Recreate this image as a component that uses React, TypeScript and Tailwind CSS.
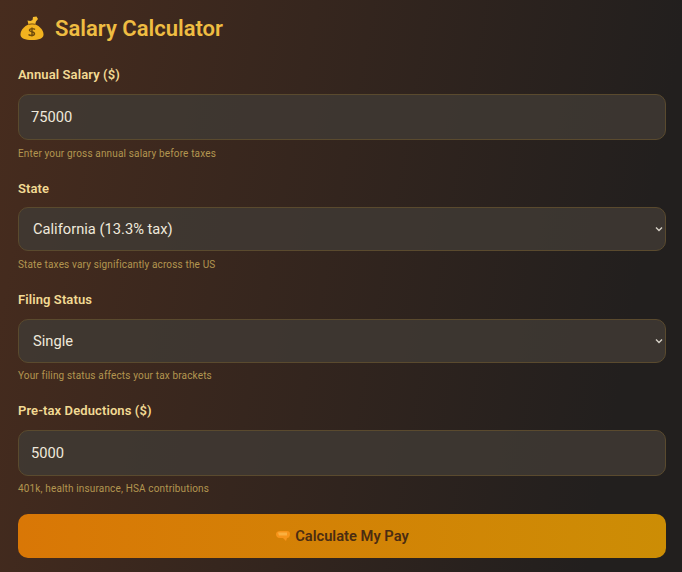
import { useState } from 'react';

const labelClass = 'block text-[13px] leading-[18px] font-semibold tracking-[0.1px] text-[#f2da94]';
const hintClass = 'text-[10px] leading-[14px] tracking-[0.15px] text-[#b39650]';
const fieldClass =
  'block w-full rounded-[10px] border border-[#5a4a2e] bg-[#3f3934d9] text-[#efe9dc] text-[14.7px] outline-none';

function MoneyBag() {
  return (
    <svg width="28" height="28" viewBox="0 0 28 28" aria-hidden="true">
      <path d="M2.500 20.500c0-4.500 4-8.500 8-10h7c4 1.500 8 5.500 8 10 0 4-4.500 5.500-11.500 5.500S2.500 24.500 2.500 20.500z" fill="#f3b31f" />
      <path d="M10.500 10.500L9.500 6.500l3 .5 2-1 .5-3 3.500-.5 1.500 2.500-2 2.500-1 3.500z" fill="#f6bc2e" />
      <path d="M10.500 10.500c2-.8 5-.8 7 0" stroke="#9a6a12" strokeWidth="1.200" fill="none" />
      <path
        d="M17 15.500c-1-1-5-1.500-5.500.5s5.500 1.500 5 4-5 1.500-6 .5M14 13.500v9"
        stroke="#6e4a0c"
        strokeWidth="1.400"
        fill="none"
      />
    </svg>
  );
}

function Coin() {
  return (
    <svg width="16" height="14" viewBox="0 0 16 14" aria-hidden="true">
      <path d="M1 5c0-2 2-3 4-3h7c2 0 3 1 3 3s-1 4-3 4l-1 3-3-3H5C2 9 1 7 1 5z" fill="#f7941a" />
      <path d="M3 3.500h9v3H4z" fill="#fab040" />
    </svg>
  );
}

function Chevron() {
  return (
    <svg
      className="pointer-events-none absolute right-[3px] top-1/2 -translate-y-1/2"
      width="8"
      height="6"
      viewBox="0 0 8 6"
      aria-hidden="true"
    >
      <path d="M1 1.500l3 3 3-3" stroke="#d6d0c6" strokeWidth="1.400" fill="none" />
    </svg>
  );
}

export default function App() {
  const [salary, setSalary] = useState('75000');
  const [state, setState] = useState('ca');
  const [status, setStatus] = useState('single');
  const [deductions, setDeductions] = useState('5000');

  return (
    <div
      className="h-[572px] w-[682px] overflow-hidden bg-[linear-gradient(100deg,#472c1e_0%,#221f1e_88%)] pl-[18px] pr-4 pt-[13px]"
      style={{ fontFamily: 'Roboto, sans-serif' }}
    >
      <h1 className="flex h-[30px] items-center gap-[9px] text-[22px] font-semibold text-[#efbd42]">
        <MoneyBag />
        Salary Calculator
      </h1>

      <form className="mt-[23px]" onSubmit={(event) => event.preventDefault()}>
        <label className={labelClass}>Annual Salary ($)</label>
        <input
          className={`${fieldClass} mt-[10px] h-[46px] px-3`}
          value={salary}
          onChange={(event) => setSalary(event.target.value)}
        />
        <p className={`${hintClass} mt-[7px]`}>Enter your gross annual salary before taxes</p>

        <label className={`${labelClass} mt-[19px]`}>State</label>
        <div className="relative mt-[9px]">
          <select
            className={`${fieldClass} h-[44px] appearance-none px-[14px]`}
            value={state}
            onChange={(event) => setState(event.target.value)}
          >
            <option value="ca" className="bg-[#2a2522]">California (13.3% tax)</option>
          </select>
          <Chevron />
        </div>
        <p className={`${hintClass} mt-[7px]`}>State taxes vary significantly across the US</p>

        <label className={`${labelClass} mt-[19px]`}>Filing Status</label>
        <div className="relative mt-[10px]">
          <select
            className={`${fieldClass} h-[44px] appearance-none px-[14px]`}
            value={status}
            onChange={(event) => setStatus(event.target.value)}
          >
            <option value="single" className="bg-[#2a2522]">Single</option>
          </select>
          <Chevron />
        </div>
        <p className={`${hintClass} mt-[6px]`}>Your filing status affects your tax brackets</p>

        <label className={`${labelClass} mt-[19px]`}>Pre-tax Deductions ($)</label>
        <input
          className={`${fieldClass} mt-[10px] h-[46px] px-3`}
          value={deductions}
          onChange={(event) => setDeductions(event.target.value)}
        />
        <p className={`${hintClass} mt-[6px]`}>401k, health insurance, HSA contributions</p>

        <button
          type="submit"
          className="mt-[18px] flex h-[44px] w-full items-center justify-center gap-1 rounded-[10px] bg-gradient-to-r from-[#d97706] to-[#cc8d05] text-[14.700px] font-semibold text-[#4a2c12]"
        >
          <Coin />
          Calculate My Pay
        </button>
      </form>
    </div>
  );
}
